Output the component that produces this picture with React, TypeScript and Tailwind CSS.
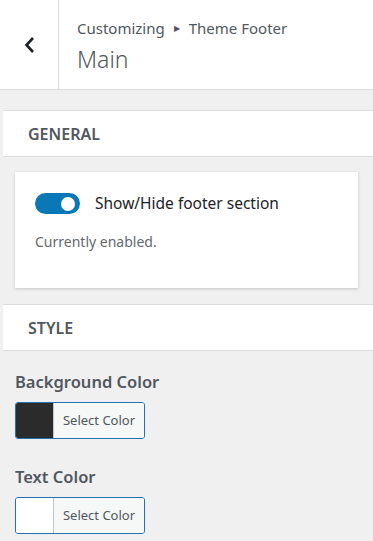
import React from "react";

function ColorButton({ swatch }: { swatch: string }) {
  return (
    <div className="flex h-[37px] w-[130px] overflow-hidden rounded-[3px] border border-[#2271b1]">
      <div className="w-[38px] border-r border-[#c3c4c7]" style={{ background: swatch }} />
      <div className="flex flex-1 items-center justify-center bg-[#f6f7f7] text-[13px] text-[#50575e]">
        Select Color
      </div>
    </div>
  );
}

export default function App() {
  return (
    <div
      className="h-[541px] w-[373px] overflow-hidden bg-[#f0f0f1]"
      style={{ fontFamily: '"Noto Sans", "Open Sans", sans-serif' }}
    >
      <div className="flex h-[90px] border-b border-[#dcdcde] bg-white">
        <div className="flex w-[59px] items-center justify-center border-r border-[#dcdcde] pl-[1px]">
          <svg width="14" height="18" viewBox="0 0 14 18">
            <path d="M10 2 L3.5 9 L10 16" fill="none" stroke="#1d2327" strokeWidth="2.6" />
          </svg>
        </div>
        <div className="flex flex-col justify-center pl-[18px] pt-[1px]">
          <div className="flex items-center text-[15px] leading-[20px] text-[#50575e]">
            Customizing
            <span className="mx-[9px] text-[8px]">▶</span>
            Theme Footer
          </div>
          <div className="mt-[8px] text-[23px] font-light leading-[26px] text-[#50575e]">Main</div>
        </div>
      </div>

      <div className="mt-[20px] ml-[3px] flex h-[47px] items-center border-y border-[#dcdcde] bg-white pl-[25px] text-[16px] font-semibold text-[#50575e]">
        GENERAL
      </div>

      <div className="mx-[15px] mt-[15px] h-[116px] bg-white pl-[20px] pt-[20px] shadow-[0_1px_3px_rgba(0,0,0,0.18)]">
        <div className="flex items-center">
          <div className="relative h-[21px] w-[45px] rounded-full bg-[#0a77b6]">
            <div className="absolute right-[5px] top-[3.5px] h-[14px] w-[14px] rounded-full bg-white" />
          </div>
          <span className="ml-[15px] text-[15.5px] text-[#1d2327]">Show/Hide footer section</span>
        </div>
        <div className="mt-[16px] text-[14px] text-[#646970]">Currently enabled.</div>
      </div>

      <div className="mt-[16px] ml-[3px] flex h-[47px] items-center border-y border-[#dcdcde] bg-white pl-[25px] text-[16px] font-semibold text-[#50575e]">
        STYLE
      </div>

      <div className="px-[15px]">
        <div className="mt-[19px] text-[16.5px] font-semibold leading-[24px] text-[#50575e]">Background Color</div>
        <div className="mt-[8px]">
          <ColorButton swatch="#2b2b2b" />
        </div>
        <div className="mt-[26px] text-[16.5px] font-semibold leading-[24px] text-[#50575e]">Text Color</div>
        <div className="mt-[8px]">
          <ColorButton swatch="#ffffff" />
        </div>
      </div>
    </div>
  );
}
